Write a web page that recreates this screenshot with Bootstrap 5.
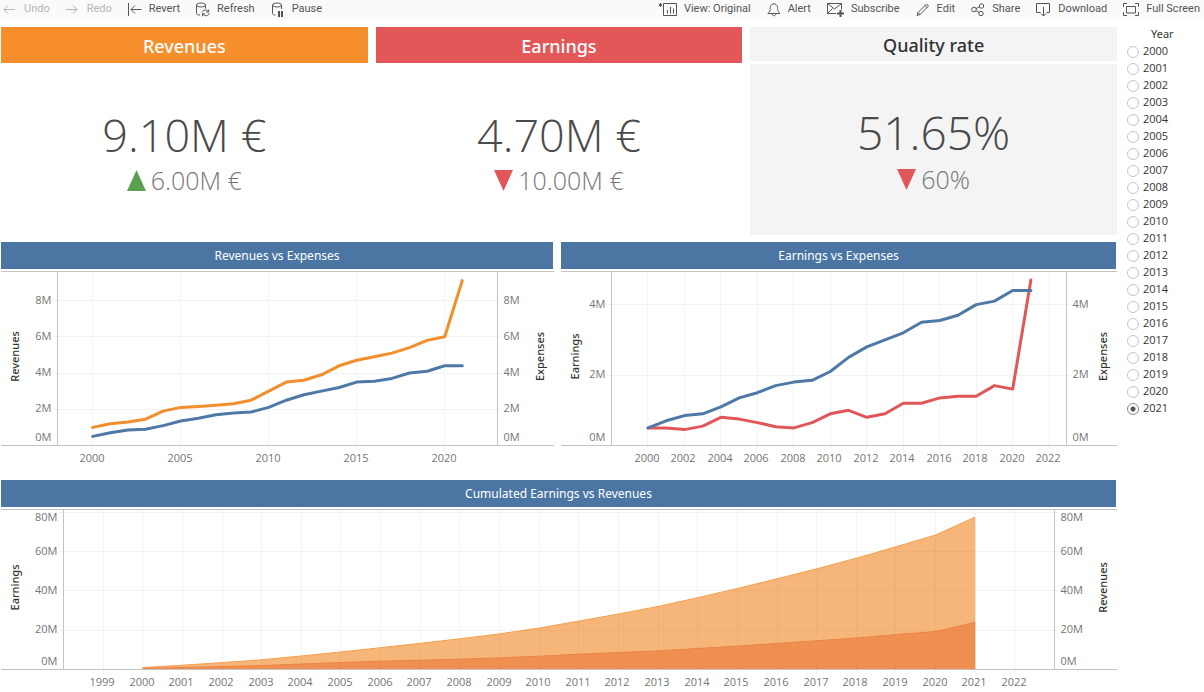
<!DOCTYPE html>
<html lang="en">
<head>
<meta charset="utf-8">
<meta name="viewport" content="width=device-width, initial-scale=1">
<title>Revenues and earnings</title>
<link href="https://cdn.jsdelivr.net/npm/bootstrap@5.3.0/dist/css/bootstrap.min.css" rel="stylesheet">
<style>
  body { font-family: "Open Sans", "Noto Sans", sans-serif; font-size: 11px; line-height: 17px; color: #333; background: #fff; }
  .toolbar { background: #fafafa; height: 20px; padding: 0 4px 0 3px; font-family: Roboto, sans-serif; }
  .toolbar-group { gap: 16px; }
  .tool { display: flex; align-items: center; gap: 7px; padding: 0; border: 0; background: none; color: #555; font-size: 11px; line-height: 17px; white-space: nowrap; }
  .tool:disabled { color: #b4b4b4; }
  .tool svg { height: 16px; fill: none; stroke: currentColor; flex: none; }
  .board { padding: 7px 0 0 1px; }
  .kpi-row { display: grid; grid-template-columns: repeat(3, 1fr); gap: 8px; }
  .kpi { height: 208px; }
  .kpi-title { height: 36px; font-size: 18px; line-height: 38px; font-weight: 500; font-family: "Noto Sans", sans-serif; text-align: center; margin: 0; color: #fff; }
  .kpi-quality .kpi-title { height: 34px; line-height: 36px; margin-bottom: 3px; color: #333; background: #f4f4f4; }
  .kpi-quality .kpi-body { background: #f4f4f4; }
  .kpi-body { padding-top: 46px; }
  .kpi-quality .kpi-body { padding-top: 40px; }
  .kpi-value { font-size: 45px; line-height: 52px; font-weight: 300; color: #4a4a4a; }
  .kpi-quality .kpi-value { font-size: 46px; line-height: 56px; }
  .kpi-target { font-size: 25px; line-height: 38px; font-weight: 300; color: #777; gap: 5px; }
  .bg-orange { background: #f58e2b; }
  .bg-red { background: #e35759; }
  .chart-row { display: grid; grid-template-columns: 553fr 556fr; gap: 7px; margin-top: 7px; }
  .chart-title { height: 27px; margin: 0 1px 2px 0; background: #4b76a4; color: #fff; font-family: "Noto Sans", sans-serif; font-size: 12px; line-height: 28px; font-weight: 400; text-align: center; }
  .plot { height: 209px; }
  .plot-wide { height: 183px; }
  .plot svg, .plot-wide svg { display: block; width: 100%; height: 100%; }
  .frame-line { stroke: #c4c4c4; fill: none; }
  .grid-line { stroke: #f3f3f3; fill: none; }
  .tick-text { font-size: 11px; fill: #757575; }
  .axis-text { font-size: 11px; font-weight: 500; font-family: "Noto Sans", sans-serif; fill: #333; text-anchor: middle; }
  .years { width: 87px; padding: 6px 0 0 10px; border: 0; margin: 0; font-size: 11px; }
  .years legend { font-size: 11px; line-height: 16px; font-weight: 400; font-family: "Noto Sans", sans-serif; padding-left: 24px; margin: 0; }
  .years label { display: flex; align-items: center; gap: 4px; height: 17px; }
  .years input { appearance: none; width: 12px; height: 12px; margin: 2px 0 0; border: 1px solid #c4c4c4; border-radius: 50%; background: #fff; }
  .years input:checked { border-color: #888; background: radial-gradient(circle, #555 2px, #fff 3px); }
</style>
</head>
<body>
<header class="toolbar d-flex justify-content-between align-items-start">
  <div class="toolbar-group d-flex">
    <button class="tool" disabled><svg width="14" viewBox="0 0 14 16"><path d="M12 8.500H.7M5 4.500L1 8.500l4 4"/></svg>Undo</button>
    <button class="tool" disabled><svg width="14" viewBox="0 0 14 16"><path d="M0 8.500h11.300M7 4.500l4 4-4 4"/></svg>Redo</button>
    <button class="tool"><svg width="14" viewBox="0 0 14 16"><path d="M.5 2v13M13.500 8.500H3M7 4.500L3 8.500l4 4"/></svg>Revert</button>
    <button class="tool"><svg width="14" viewBox="0 0 14 16"><path d="M.5 4v8.500c0 1 1.500 1.500 3.500 1.600M9.500 4v3.500M.5 4c0-2.600 9-2.600 9 0s-9 2.600-9 0M6 11.500c.8-3 5-3.300 6.300-.8M12.700 8.500v2.500h-2.500M13.300 12.200c-.8 3-5 3.300-6.300.8M6.500 15.300v-2.500H9"/></svg>Refresh</button>
    <button class="tool"><svg width="14" viewBox="0 0 14 16"><path d="M1.500 4v8.500c0 1 1.500 1.500 3 1.600M10.500 4v4M1.500 4c0-2.600 9-2.600 9 0s-9 2.600-9 0"/><path d="M8 10v6M11 10v6" stroke-width="2"/></svg>Pause</button>
  </div>
  <div class="toolbar-group d-flex">
    <button class="tool"><svg width="19" viewBox="0 0 19 16"><path d="M2.500 2v4M.8 3l3.400 2M4.200 3L.8 5" /><path d="M5.500 2.500h13v12h-13zM9.500 12.500V9M12.500 12.500V6M15.500 12.500v-5"/></svg>View: Original</button>
    <button class="tool"><svg width="14" viewBox="0 0 14 16"><path d="M.8 12.500c3-2.500 2-4 2.700-7 .8-3.600 6-3.600 6.800 0 .7 3-.3 4.500 2.700 7zM5 13c.3 2.300 3.500 2.300 3.800 0"/></svg>Alert</button>
    <button class="tool"><svg width="17" viewBox="0 0 17 16"><path d="M9 12.500H.5v-10h14v6M.5 2.500L7.500 8l7-5.500M.5 12.500l5-5"/><path d="M13.500 9v7M10 12.500h7" stroke-width="2"/></svg>Subscribe</button>
    <button class="tool"><svg width="14" viewBox="0 0 14 16"><path d="M1 14.500l1-3L10.500 3l2 2L4 13.500zM9 4.500l2 2M2 11.500l2 2"/></svg>Edit</button>
    <button class="tool"><svg width="14" viewBox="0 0 14 16"><circle cx="3" cy="8.500" r="2.300"/><circle cx="10.500" cy="5" r="2.200"/><circle cx="10" cy="12.500" r="2.200"/><path d="M5 7.500L8.500 6M5 9.500l3 2"/></svg>Share</button>
    <button class="tool"><svg width="15" viewBox="0 0 15 16"><path d="M4.500 11.500h-4v-9h13v9h-3M7.500 6v9M5 12.500L7.500 15l2.500-2.500"/></svg>Download</button>
    <button class="tool"><svg width="16" viewBox="0 0 16 16"><path d="M3.500 5.500h9v6.500h-9zM.5 6V2.500H4M12 2.500h3.500V6M.5 11v3.500H4M12 14.500h3.500V11"/></svg>Full Screen</button>
  </div>
</header>

<div class="d-flex">
  <main class="board flex-grow-1">
    <div class="kpi-row">
      <section class="kpi d-flex flex-column">
        <h2 class="kpi-title bg-orange">Revenues</h2>
        <div class="kpi-body flex-grow-1 text-center">
          <div class="kpi-value">9.10M €</div>
          <div class="kpi-target d-flex justify-content-center align-items-center"><svg width="19" height="21" viewBox="0 0 19 21"><path d="M0 21h19L9.500 0z" fill="#59a14f"/></svg>6.00M €</div>
        </div>
      </section>
      <section class="kpi d-flex flex-column">
        <h2 class="kpi-title bg-red">Earnings</h2>
        <div class="kpi-body flex-grow-1 text-center">
          <div class="kpi-value">4.70M €</div>
          <div class="kpi-target d-flex justify-content-center align-items-center"><svg width="19" height="21" viewBox="0 0 19 21"><path d="M0 0h19L9.500 21z" fill="#e15759"/></svg>10.00M €</div>
        </div>
      </section>
      <section class="kpi kpi-quality d-flex flex-column">
        <h2 class="kpi-title">Quality rate</h2>
        <div class="kpi-body flex-grow-1 text-center">
          <div class="kpi-value">51.65%</div>
          <div class="kpi-target d-flex justify-content-center align-items-center"><svg width="19" height="21" viewBox="0 0 19 21"><path d="M0 0h19L9.500 21z" fill="#e15759"/></svg>60%</div>
        </div>
      </section>
    </div>
    <div class="chart-row">
      <section>
        <h3 class="chart-title">Revenues vs Expenses</h3>
        <div class="plot" id="revenues"></div>
      </section>
      <section>
        <h3 class="chart-title">Earnings vs Expenses</h3>
        <div class="plot" id="earnings"></div>
      </section>
    </div>
    <section>
      <h3 class="chart-title">Cumulated Earnings vs Revenues</h3>
      <div class="plot-wide" id="cumulated"></div>
    </section>
  </main>
  <fieldset class="years flex-shrink-0" id="years"><legend>Year</legend></fieldset>
</div>

<script src="https://cdn.jsdelivr.net/npm/bootstrap@5.3.0/dist/js/bootstrap.bundle.min.js"></script>
<script>
  // Yearly figures in millions of euros, 2000 to 2021
  const revenues = [1, 1.2, 1.3, 1.45, 1.9, 2.1, 2.15, 2.22, 2.3, 2.5, 3, 3.5, 3.6, 3.9, 4.4, 4.7, 4.9, 5.1, 5.4, 5.8, 6, 9.1];
  const expenses = [.5, .7, .85, .9, 1.1, 1.35, 1.5, 1.7, 1.8, 1.85, 2.1, 2.5, 2.8, 3, 3.2, 3.5, 3.55, 3.7, 4, 4.1, 4.4, 4.4];
  const earnings = [.5, .5, .45, .55, .8, .75, .65, .53, .5, .65, .9, 1, .8, .9, 1.2, 1.2, 1.35, 1.4, 1.4, 1.7, 1.6, 4.7];
  const cumulate = list => { let sum = 0; return list.map(v => sum += v); };

  const charts = [
    { id: 'revenues', side: 56, bottom: 174, max: 9.6, step: 2, span: 25, from: 2000, to: 2020, every: 5, left: 'Revenues', right: 'Expenses',
      series: [{ data: revenues, color: '#f28e2b' }, { data: expenses, color: '#4e79a7' }] },
    { id: 'earnings', side: 50, bottom: 174, max: 4.94, step: 2, span: 24.95, from: 2000, to: 2022, every: 2, left: 'Earnings', right: 'Expenses',
      series: [{ data: earnings, color: '#e15759' }, { data: expenses, color: '#4e79a7' }] },
    { id: 'cumulated', side: 62, bottom: 160, max: 81.4, step: 20, span: 25, from: 1999, to: 2022, every: 1, left: 'Earnings', right: 'Revenues', area: true,
      series: [{ data: cumulate(revenues), color: '#f5a04c', fill: '#f6b679' }, { data: cumulate(earnings), color: '#ec8347', fill: '#f09050' }] }
  ];

  function draw(c) {
    const box = document.getElementById(c.id);
    const w = box.clientWidth, l = c.side + .5, r = w - c.side - .5, top = .5, b = c.bottom + .5;
    const x = year => l + (year - 1998) * (r - l) / c.span;
    const y = v => b - v * (b - top) / c.max;
    const crisp = v => Math.round(v - .5) + .5;
    let grid = '', text = '', marks = '';
    for (let v = 0; v <= c.max; v += c.step) {
      const ly = Math.round(Math.min(b - 8, Math.max(top + 8, y(v)))) + 3;
      grid += `<path d="M${l - 4} ${crisp(y(v))}H${r + 4}"/>`;
      text += `<text x="${l - 6}" y="${ly}" text-anchor="end">${v}M</text><text x="${r + 6}" y="${ly}">${v}M</text>`;
    }
    for (let t = c.from; t <= c.to; t += c.every) {
      grid += `<path d="M${crisp(x(t))} ${top}V${b + 4}"/>`;
      text += `<text x="${Math.round(x(t)) - 1}" y="${Math.floor(b) + 17}" text-anchor="middle">${t}</text>`;
    }
    for (const s of c.series) {
      const line = s.data.map((v, i) => `${x(2000 + i).toFixed(1)} ${y(v).toFixed(1)}`).join('L');
      if (c.area) marks += `<path d="M${x(2000)} ${b}L${line}V${b}z" fill="${s.fill}"/><path d="M${line}" fill="none" stroke="${s.color}"/>`;
      else marks += `<path d="M${line}" fill="none" stroke="${s.color}" stroke-width="3" stroke-linejoin="round" stroke-linecap="round"/>`;
    }
    // Over filled areas the grid stays faintly visible
    const over = c.area ? `<clipPath id="${c.id}-clip"><path d="M${x(2000)} ${b}L${c.series[0].data.map((v, i) => x(2000 + i) + ' ' + y(v)).join('L')}V${b}z"/></clipPath><g clip-path="url(#${c.id}-clip)" stroke="#c07838" stroke-opacity=".08" fill="none">${grid}</g>` : '';
    const mid = (top + b) / 2 - 2;
    box.innerHTML = `<svg role="img" aria-label="${c.left} and ${c.right} by year">
      <g class="grid-line">${grid}</g>${marks}${over}
      <path class="frame-line" d="M0 ${top}H${w}M0 ${b}H${w}M${l} ${top}V${b}M${r} ${top}V${b}"/>
      <g class="tick-text">${text}</g>
      <text class="axis-text" transform="translate(18 ${mid}) rotate(-90)">${c.left}</text>
      <text class="axis-text" transform="translate(${w - 10} ${mid}) rotate(-90)">${c.right}</text></svg>`;
  }

  const drawAll = () => charts.forEach(draw);
  const years = document.getElementById('years');
  for (let t = 2000; t <= 2021; t++)
    years.insertAdjacentHTML('beforeend', `<label><input type="radio" name="year" value="${t}"${t === 2021 ? ' checked' : ''}>${t}</label>`);
  drawAll();
  addEventListener('resize', drawAll);
</script>
</body>
</html>
